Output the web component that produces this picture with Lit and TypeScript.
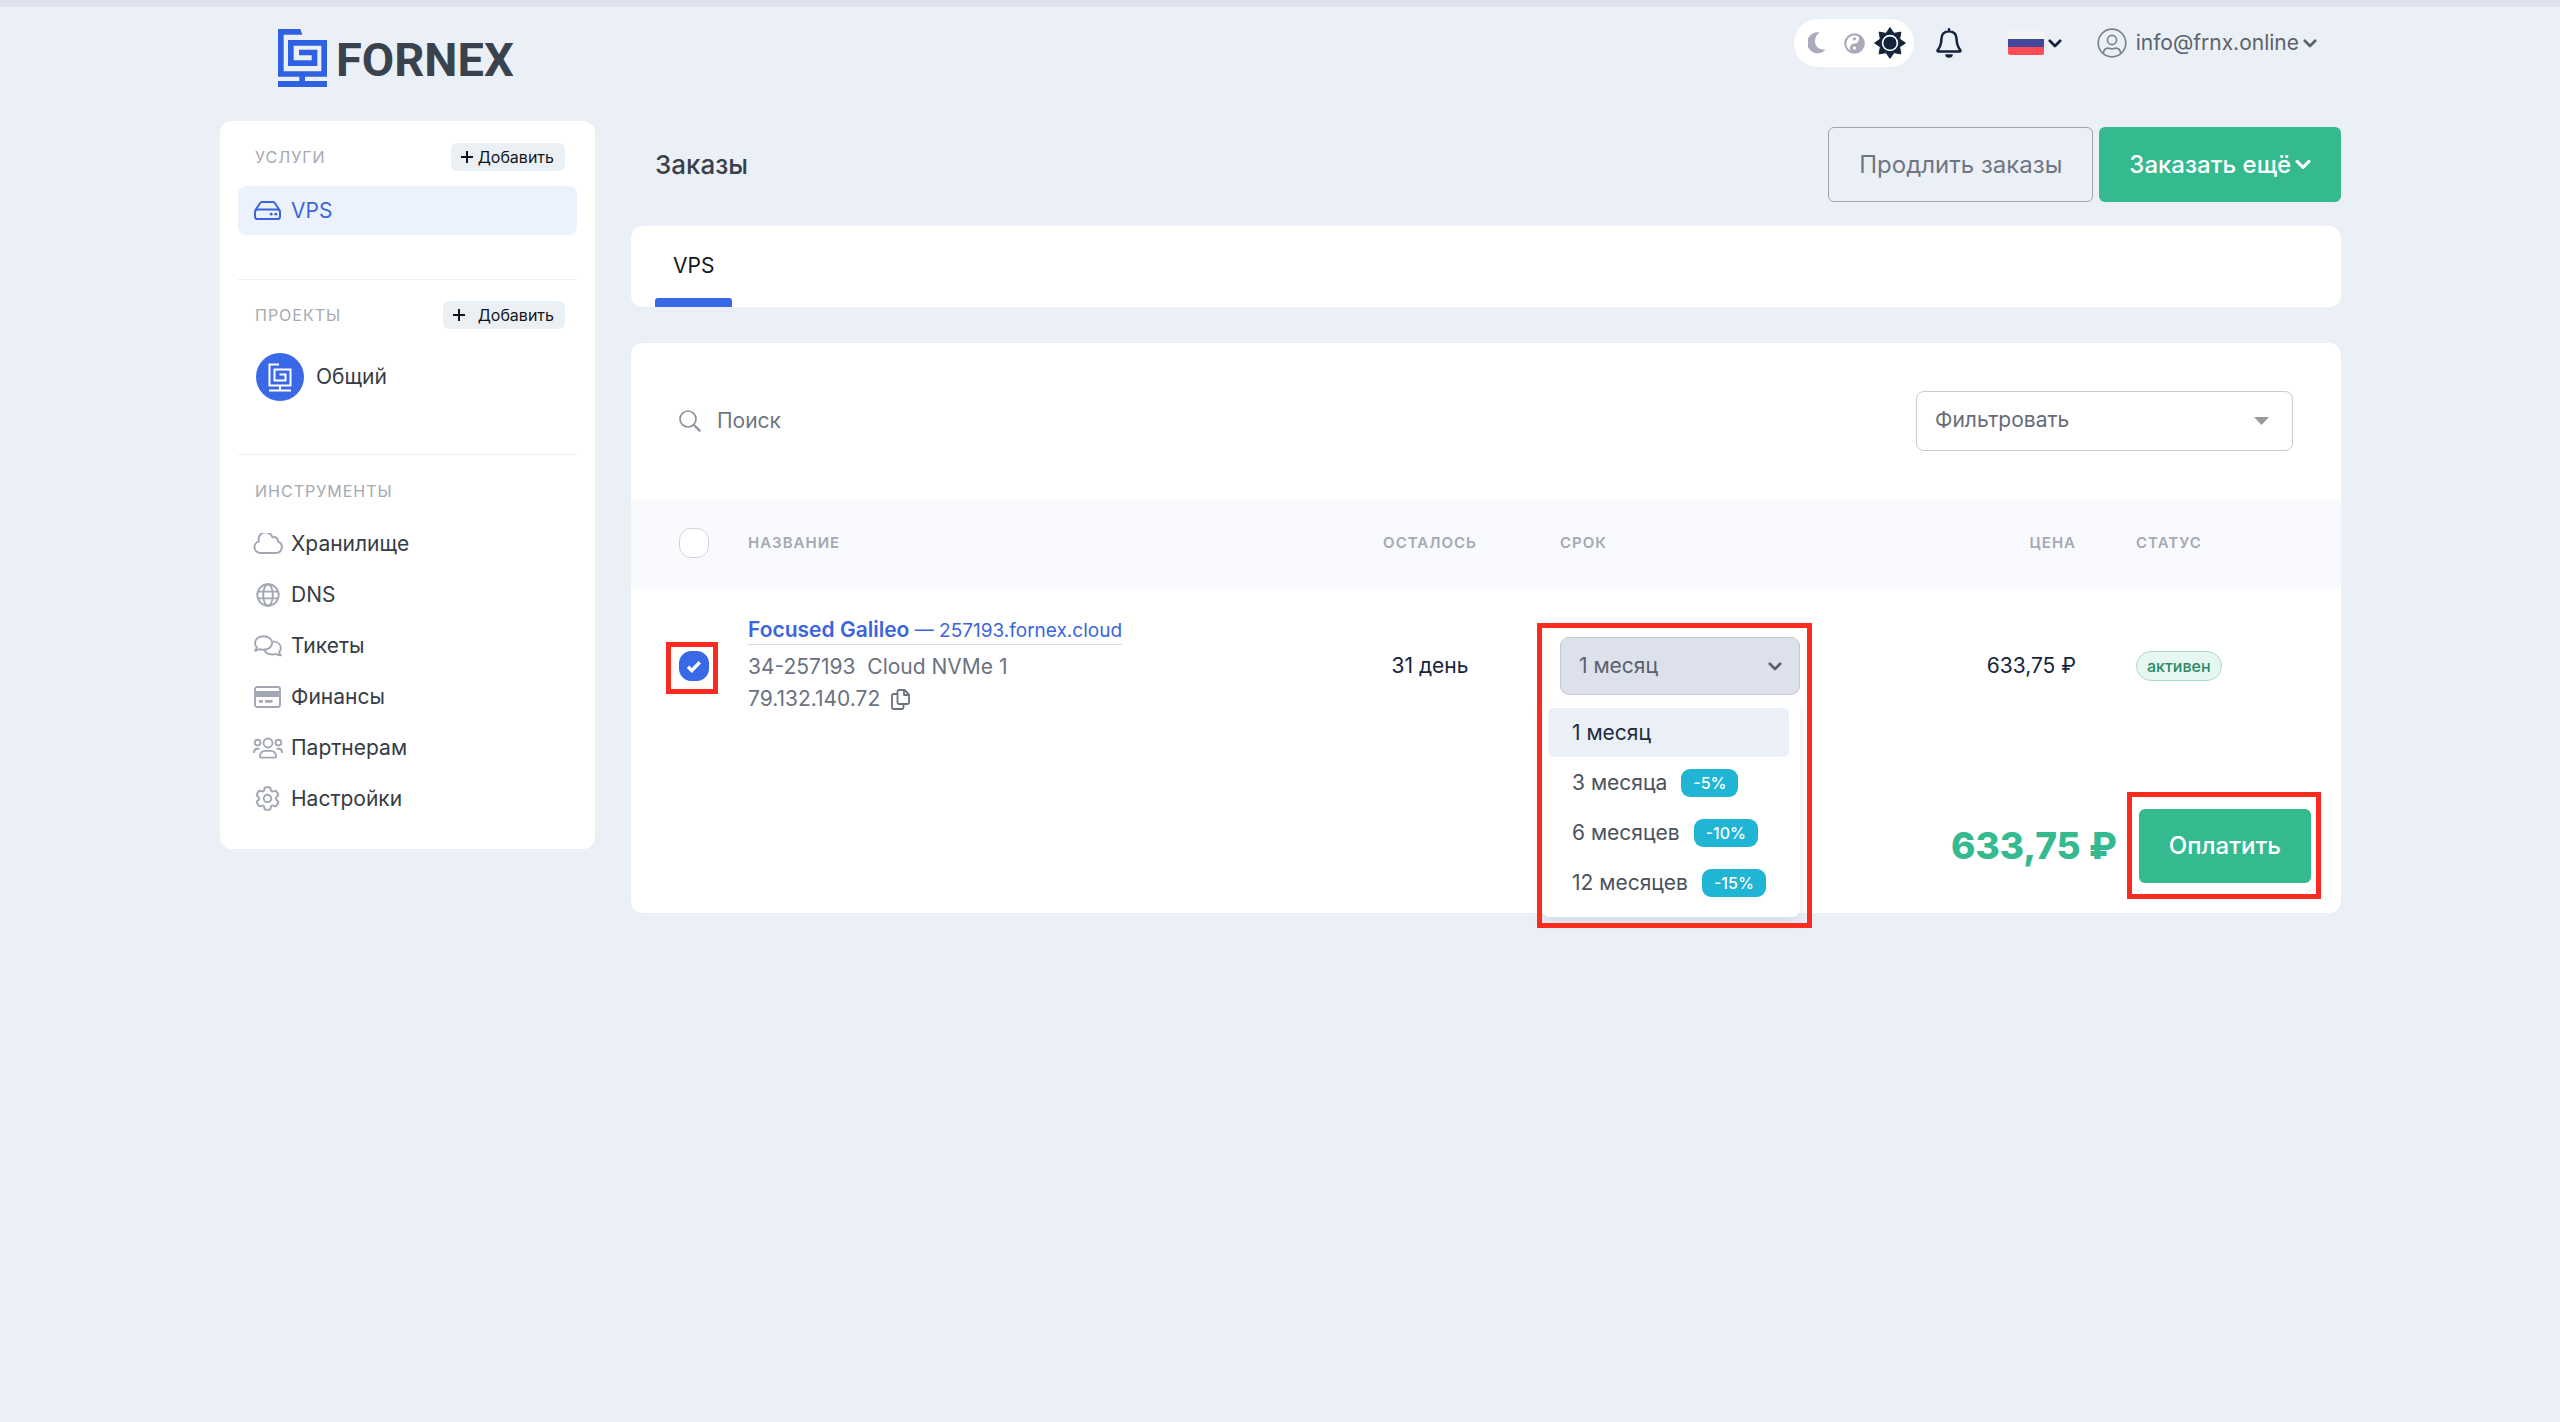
import { LitElement, html, css, svg } from "lit";
import { customElement, state } from "lit/decorators.js";
import { classMap } from "lit/directives/class-map.js";

const logoPaths = svg`
  <path d="M0 0H67L73 17H17V127H130V50H47V94H101V79H63V62H118V111H30V33H147V143H81V156H147V174H0V156H64V143H0Z" fill="currentColor"/>
`;

const chevron = html`<svg class="chevron" viewBox="0 0 14 9" aria-hidden="true">
  <path d="M1.800 1.800l5.200 5.200 5.200-5.200" fill="none" stroke="currentColor" stroke-width="2.700" stroke-linecap="round" stroke-linejoin="round"/>
</svg>`;

const plus = html`<svg class="plus" viewBox="0 0 12 12" aria-hidden="true">
  <path d="M6 0.5V11.5M0.5 6H11.5" fill="none" stroke="currentColor" stroke-width="2" stroke-linecap="round"/>
</svg>`;

const icons = {
  drive: html`<svg width="27" height="19" viewBox="0 0 27 19" aria-hidden="true">
    <g fill="none" stroke="currentColor" stroke-width="2" stroke-linejoin="round">
      <path d="M1.2 9.5L6 2.2Q6.8 1 8 1H19Q20.2 1 21 2.2L25.8 9.5"/>
      <rect x="1" y="8.6" width="25" height="9.4" rx="2.6"/>
    </g>
    <circle cx="17.2" cy="13.2" r="1.4" fill="currentColor"/><circle cx="21.8" cy="13.2" r="1.4" fill="currentColor"/>
  </svg>`,
  cloud: html`<svg width="30" height="21" viewBox="0 0 30 21" aria-hidden="true">
    <path d="M7 20H23a5.900 5.900 0 0 0 2-11.400 4.200 4.200 0 0 0-5.600-4.400A7 7 0 0 0 5.900 8.400 5.900 5.900 0 0 0 7 20z" fill="none" stroke="currentColor" stroke-width="2" stroke-linejoin="round"/>
  </svg>`,
  globe: html`<svg width="24" height="24" viewBox="0 0 24 24" aria-hidden="true">
    <g fill="none" stroke="currentColor" stroke-width="1.900">
      <circle cx="12" cy="12" r="10.700"/><ellipse cx="12" cy="12" rx="4.800" ry="10.700"/>
      <path d="M1.900 8.600H22.100M1.900 15.400H22.100"/>
    </g>
  </svg>`,
  chat: html`<svg width="28" height="22" viewBox="0 0 28 22" aria-hidden="true">
    <g fill="none" stroke="currentColor" stroke-width="1.900" stroke-linejoin="round">
      <path d="M9.600 1.200c4.900 0 8.600 3 8.600 6.800s-3.700 6.800-8.600 6.800c-1.400 0-2.700-.2-3.900-.7C4.500 15 3 15.700 1 15.700c1-1.100 1.600-2.300 1.800-3.400C1.600 11.100 1 9.700 1 8c0-3.800 3.700-6.800 8.600-6.800z"/>
      <path d="M18.800 6.400c4.700.2 8 2.900 8 6.500 0 1.700-.7 3.100-1.800 4.200.3 1.200 1 2.300 1.800 3.300-1.900 0-3.500-.6-4.700-1.500-1.200.4-2.500.6-3.800.6-3.700 0-6.800-1.800-8-4.600"/>
    </g>
  </svg>`,
  card: html`<svg width="27" height="22" viewBox="0 0 27 22" aria-hidden="true">
    <rect x="1" y="1" width="25" height="20" rx="2.200" fill="none" stroke="currentColor" stroke-width="1.900"/>
    <rect x="1" y="5" width="25" height="6" fill="currentColor"/>
    <rect x="5" y="14" width="4" height="2.800" rx=".6" fill="currentColor"/><rect x="11" y="14" width="7.500" height="2.800" rx=".6" fill="currentColor"/>
  </svg>`,
  people: html`<svg width="30" height="22" viewBox="0 0 30 22" aria-hidden="true">
    <g fill="none" stroke="currentColor" stroke-width="1.900" stroke-linecap="round" stroke-linejoin="round">
      <circle cx="15" cy="6" r="4.500"/><circle cx="4.600" cy="5.600" r="2.900"/><circle cx="25.400" cy="5.600" r="2.900"/>
      <path d="M8 20.600c-.8 0-1.200-.6-1.100-1.300.4-3.400 2.600-5.400 5.500-5.400h5.200c2.900 0 5.100 2 5.500 5.400.1.700-.3 1.300-1.100 1.300z"/>
      <path d="M1 15.200c.1-2.200 1.400-3.500 3.300-3.500h1.300M29 15.200c-.1-2.200-1.400-3.500-3.300-3.500h-1.300"/>
    </g>
  </svg>`,
  gear: html`<svg width="25" height="25" viewBox="2 2 20 20" aria-hidden="true">
    <g fill="none" stroke="currentColor" stroke-width="1.600" stroke-linejoin="round">
      <path d="M9.594 3.940c.09-.542.56-.94 1.110-.94h2.593c.55 0 1.020.398 1.110.94l.213 1.281c.063.374.313.686.645.87.074.04.147.083.22.127.325.196.72.257 1.075.124l1.217-.456a1.125 1.125 0 0 1 1.370.49l1.296 2.247a1.125 1.125 0 0 1-.26 1.431l-1.003.827c-.293.241-.438.613-.43.992a7.723 7.723 0 0 1 0 .255c-.008.378.137.75.43.991l1.004.827c.424.35.534.955.26 1.430l-1.298 2.247a1.125 1.125 0 0 1-1.369.491l-1.217-.456c-.355-.133-.75-.072-1.076.124a6.470 6.470 0 0 1-.22.128c-.331.183-.581.495-.644.869l-.213 1.281c-.09.543-.56.94-1.110.94h-2.594c-.55 0-1.019-.398-1.110-.94l-.213-1.281c-.062-.374-.312-.686-.644-.87a6.520 6.520 0 0 1-.22-.127c-.325-.196-.72-.257-1.076-.124l-1.217.456a1.125 1.125 0 0 1-1.369-.49l-1.297-2.247a1.125 1.125 0 0 1 .26-1.431l1.004-.827c.292-.24.437-.613.43-.991a6.932 6.932 0 0 1 0-.255c.007-.38-.138-.751-.43-.992l-1.004-.827a1.125 1.125 0 0 1-.26-1.430l1.297-2.247a1.125 1.125 0 0 1 1.370-.491l1.216.456c.356.133.751.072 1.076-.124.072-.044.146-.086.22-.128.332-.183.582-.495.644-.869l.214-1.280Z"/>
      <circle cx="12" cy="12" r="3"/>
    </g>
  </svg>`,
};

const sunPoints = Array.from({ length: 16 }, (_, i) => {
  const r = i % 2 ? 10.4 : 15.4;
  const a = (i * Math.PI) / 8;
  return `${(16 + r * Math.sin(a)).toFixed(2)},${(16 - r * Math.cos(a)).toFixed(2)}`;
}).join(" ");

const tools = [
  { label: "Хранилище", icon: icons.cloud },
  { label: "DNS", icon: icons.globe },
  { label: "Тикеты", icon: icons.chat },
  { label: "Финансы", icon: icons.card },
  { label: "Партнерам", icon: icons.people },
  { label: "Настройки", icon: icons.gear },
];

const terms = [
  { label: "1 месяц", discount: "" },
  { label: "3 месяца", discount: "-5%" },
  { label: "6 месяцев", discount: "-10%" },
  { label: "12 месяцев", discount: "-15%" },
];

const base = css`
  * {
    box-sizing: border-box;
  }
  svg {
    display: block;
    flex: none;
  }
  a {
    color: inherit;
    text-decoration: none;
  }
  button,
  input,
  select {
    margin: 0;
    border: 0;
    padding: 0;
    background: none;
    font: inherit;
    color: inherit;
  }
  button {
    cursor: pointer;
  }
  .chevron {
    width: 14px;
    height: 9px;
  }
  .plus {
    width: 12px;
    height: 12px;
  }
`;

@customElement("fx-header")
export class FxHeader extends LitElement {
  static styles = [
    base,
    css`
      :host {
        display: block;
      }
      .header {
        display: flex;
        justify-content: space-between;
        align-items: flex-start;
        padding: 12px 24px 34px 58px;
      }
      .logo {
        display: flex;
        align-items: center;
        gap: 9px;
        margin-top: 10px;
        color: #2f62e3;
      }
      .brand {
        padding-top: 4px;
        font: 700 47px/54px Roboto, sans-serif;
        color: #3a424d;
      }
      .controls {
        display: flex;
        align-items: center;
        height: 48px;
      }
      .themes {
        display: flex;
        align-items: center;
        gap: 18px;
        height: 48px;
        padding: 0 8px 0 14px;
        border-radius: 24px;
        background: #fff;
        color: #a9abbd;
      }
      .themes .active {
        margin-left: -9px;
        color: #14233c;
      }
      .bell {
        margin-left: 22px;
        color: #14233c;
      }
      .lang {
        display: flex;
        align-items: center;
        gap: 4px;
        margin-left: 46px;
        color: #14233c;
      }
      .user {
        display: flex;
        align-items: center;
        gap: 4px;
        margin-left: 35px;
        color: #5b626c;
      }
      .user svg:first-child {
        margin-right: 5px;
        color: #7d838d;
      }
    `,
  ];

  render() {
    return html`
      <header class="header">
        <a class="logo" href="#" aria-label="FORNEX">
          <svg width="49" height="58" viewBox="0 0 147 174" aria-hidden="true">${logoPaths}</svg>
          <span class="brand">FORNEX</span>
        </a>
        <div class="controls">
          <div class="themes">
            <button aria-label="Тёмная тема">
              <svg width="18" height="22" viewBox="0 0 18 22" aria-hidden="true">
                <path d="M11.500.5A10.500 10.500 0 1 0 17.800 17.200C11 18.500 7 14.500 7 9 7 5.500 8.700 2.500 11.500.5z" fill="currentColor"/>
              </svg>
            </button>
            <button aria-label="Системная тема">
              <svg width="21" height="21" viewBox="0 0 21 21" aria-hidden="true">
                <circle cx="10.500" cy="10.500" r="9.200" fill="#fff" stroke="currentColor" stroke-width="2.200"/>
                <path d="M10.500 1.200A9.300 9.300 0 0 1 10.500 19.800A4.650 4.650 0 0 1 10.500 10.500A4.650 4.650 0 0 0 10.500 1.200z" fill="currentColor"/>
                <circle cx="10.500" cy="5.900" r="1.600" fill="currentColor"/>
                <circle cx="10.500" cy="15.100" r="1.600" fill="#fff"/>
              </svg>
            </button>
            <button class="active" aria-label="Светлая тема">
              <svg width="32" height="32" viewBox="0 0 32 32" aria-hidden="true">
                <polygon points=${sunPoints} fill="currentColor" stroke="currentColor" stroke-width="1" stroke-linejoin="round"/>
                <circle cx="16" cy="16" r="7.400" fill="none" stroke="#fff" stroke-width="1.600"/>
              </svg>
            </button>
          </div>
          <button class="bell" aria-label="Уведомления">
            <svg width="26" height="30" viewBox="0 0 26 30" aria-hidden="true">
              <path d="M13 3.200C8.300 3.200 5.400 6.600 5.400 11c0 6-1.700 8.600-3.700 11.200-.4.600 0 1.300.7 1.300h21.200c.7 0 1.100-.7.7-1.300-2-2.600-3.700-5.200-3.700-11.200 0-4.400-2.900-7.800-7.600-7.800zM13 1.300V3" fill="none" stroke="currentColor" stroke-width="2.500" stroke-linecap="round" stroke-linejoin="round"/>
              <path d="M9.200 26.200H16.800A3.800 3.600 0 0 1 9.200 26.200z" fill="currentColor"/>
            </svg>
          </button>
          <button class="lang" aria-label="Язык">
            <svg width="36" height="24" viewBox="0 0 36 24" aria-hidden="true">
              <path d="M2 0H34a2 2 0 0 1 2 2V8H0V2a2 2 0 0 1 2-2z" fill="#f4f4f4"/>
              <rect y="8" width="36" height="8" fill="#42479b"/>
              <path d="M0 16H36V22a2 2 0 0 1-2 2H2a2 2 0 0 1-2-2z" fill="#ff4b57"/>
            </svg>
            ${chevron}
          </button>
          <button class="user">
            <svg width="30" height="30" viewBox="0 0 30 30" aria-hidden="true">
              <g fill="none" stroke="currentColor" stroke-width="1.700">
                <circle cx="15" cy="15" r="13.800"/><circle cx="15" cy="12" r="4.600"/>
                <path d="M6.300 25.500c.4-3.700 2.400-5.400 4.800-5.400 1.400 0 2 .8 3.900.8s2.500-.8 3.900-.8c2.400 0 4.400 1.700 4.800 5.400"/>
              </g>
            </svg>
            <span>info@frnx.online</span>
            ${chevron}
          </button>
        </div>
      </header>
    `;
  }
}

@customElement("fx-sidebar")
export class FxSidebar extends LitElement {
  static styles = [
    base,
    css`
      :host {
        display: block;
      }
      .card {
        padding: 22px 18px 25px;
        border-radius: 12px;
        background: #fff;
      }
      .caption {
        display: flex;
        align-items: center;
        justify-content: space-between;
        padding: 0 12px 0 17px;
        font-size: 16px;
        line-height: 20px;
        letter-spacing: 1px;
        color: #a4a9b3;
      }
      .add {
        display: flex;
        align-items: center;
        gap: 5px;
        height: 28px;
        padding: 0 11px 0 10px;
        border-radius: 6px;
        background: #ebf0f5;
        font-size: 16px;
        letter-spacing: normal;
        color: #12161c;
      }
      .add.wide {
        gap: 13px;
      }
      .item {
        display: flex;
        align-items: center;
        gap: 8px;
        height: 51px;
        padding-left: 14px;
        border-radius: 8px;
        color: #363c46;
      }
      .slot {
        display: flex;
        justify-content: center;
        width: 31px;
        color: #a3a7b5;
      }
      .item.active {
        height: 49px;
        margin-top: 15px;
        background: #ebf2fe;
        color: #3c64dc;
      }
      .active .slot {
        color: inherit;
      }
      .group {
        margin-top: 44px;
        padding-top: 21px;
        border-top: 1px solid #edeff3;
      }
      .project {
        display: flex;
        align-items: center;
        gap: 12px;
        margin-top: 24px;
        padding-left: 18px;
        color: #363c46;
      }
      .avatar {
        display: flex;
        align-items: center;
        justify-content: center;
        width: 48px;
        height: 48px;
        border-radius: 50%;
        background: #3a69e8;
        color: #fff;
      }
      .tools {
        margin-top: 53px;
        padding-top: 26px;
      }
      .list {
        margin: 17px 0 0;
        padding: 0;
        list-style: none;
      }
    `,
  ];

  render() {
    return html`
      <nav class="card">
        <div class="caption"><span>УСЛУГИ</span><button class="add">${plus}Добавить</button></div>
        <a class="item active" href="#"><span class="slot">${icons.drive}</span>VPS</a>
        <div class="group">
          <div class="caption"><span>ПРОЕКТЫ</span><button class="add wide">${plus}Добавить</button></div>
          <a class="project" href="#">
            <span class="avatar">
              <svg width="24" height="29" viewBox="0 0 24 29" aria-hidden="true">
                <path d="M11 1.500H1.500V22.500H22.500V6.500H6.500V17.500H17.500V11.500H11.500M12 22.500V27.300M1 27.500H23" fill="none" stroke="currentColor" stroke-width="2"/>
              </svg>
            </span>
            Общий
          </a>
        </div>
        <div class="group tools">
          <div class="caption"><span>ИНСТРУМЕНТЫ</span></div>
          <ul class="list">
            ${tools.map(
              (t) => html`<li><a class="item" href="#"><span class="slot">${t.icon}</span>${t.label}</a></li>`,
            )}
          </ul>
        </div>
      </nav>
    `;
  }
}

@customElement("fx-orders")
export class FxOrders extends LitElement {
  static styles = [
    base,
    css`
      :host {
        display: block;
      }
      .head {
        display: flex;
        align-items: center;
        gap: 6px;
        padding: 6px 0 24px 24px;
      }
      .title {
        flex: 1;
        margin: 0;
        font-size: 26px;
        font-weight: 500;
        color: #3a414b;
      }
      .btn {
        display: flex;
        align-items: center;
        justify-content: center;
        gap: 4px;
        height: 75px;
        padding: 0 30px;
        border-radius: 6px;
        font-size: 24px;
      }
      .outline {
        border: 1px solid #9ea4b0;
        color: #6f7681;
      }
      .solid {
        background: #35ba90;
        color: #fff;
        font-weight: 500;
      }
      .solid .chevron {
        width: 16px;
        height: 11px;
      }
      .card {
        border-radius: 12px;
        background: #fff;
      }
      .tabs {
        display: flex;
        padding: 0 24px;
      }
      .tab {
        position: relative;
        height: 81px;
        padding: 0 18px 2px;
        color: #14181e;
      }
      .tab::after {
        content: "";
        position: absolute;
        inset: auto 0 0;
        height: 9px;
        border-radius: 3px 3px 0 0;
        background: #3a69e8;
      }
      .panel {
        margin-top: 36px;
      }
      .toolbar {
        display: flex;
        align-items: center;
        justify-content: space-between;
        padding: 48px 48px 49px;
      }
      .search {
        display: flex;
        flex: 1;
        align-items: center;
        gap: 16px;
        color: #8d929d;
      }
      .search input {
        flex: 1;
        outline: 0;
        color: #4a505a;
      }
      .search input::placeholder {
        color: #6f7582;
        opacity: 1;
      }
      .select {
        position: relative;
        display: flex;
        align-items: center;
      }
      .select select {
        appearance: none;
        width: 100%;
        padding: 0 18px;
      }
      .select svg {
        position: absolute;
        right: 18px;
        pointer-events: none;
      }
      .filter {
        width: 377px;
      }
      .filter select {
        height: 60px;
        padding-bottom: 2px;
        border: 1px solid #c9ccd2;
        border-radius: 8px;
        color: #666c78;
      }
      .filter svg {
        right: 24px;
        color: #999;
      }
      .table {
        width: 100%;
        border-collapse: collapse;
      }
      th {
        height: 89px;
        padding: 0 0 3px;
        background: #f8fafd;
        font-size: 15px;
        font-weight: 600;
        letter-spacing: 1px;
        text-align: left;
        color: #a4a9b3;
      }
      td {
        padding: 28px 0;
        color: #16253d;
      }
      .c-check {
        width: 117px;
        padding-left: 48px;
      }
      .c-left {
        width: 200px;
        text-align: center;
      }
      .c-term {
        width: 300px;
        padding-left: 30px;
      }
      .c-price {
        width: 275px;
        padding-right: 29px;
        text-align: right;
      }
      .c-state {
        width: 236px;
        padding-left: 31px;
      }
      .check {
        position: relative;
        display: flex;
        width: 30px;
        height: 30px;
      }
      .check input {
        appearance: none;
        width: 30px;
        height: 30px;
        border: 1px solid #cfd3da;
        border-radius: 12px;
        background: #fff;
      }
      .check input:checked {
        border-color: #3a69e8;
        background: #3a69e8;
      }
      .check svg {
        position: absolute;
        inset: 9px auto auto 7px;
        pointer-events: none;
      }
      .mark {
        position: absolute;
        border: 5px solid #fa2c20;
        pointer-events: none;
      }
      .mark-check {
        inset: -9px -9px -13px -13px;
      }
      .name {
        display: block;
        width: fit-content;
        margin-bottom: 6px;
        border-bottom: 1px solid #d8dbe1;
        font-size: 19px;
        line-height: 26px;
        color: #3c64dc;
      }
      .name b {
        font-size: 21px;
        font-weight: 600;
      }
      .line {
        display: flex;
        align-items: center;
        gap: 11px;
        line-height: 32px;
        color: #6b7280;
      }
      .plan {
        white-space: pre;
      }
      .term {
        position: relative;
        width: 240px;
      }
      .term select {
        height: 58px;
        border: 1px solid #c4c8d6;
        border-radius: 9px;
        background: #dde1eb;
        color: #5a616b;
      }
      .select .chevron {
        color: #5a616b;
      }
      .menu {
        position: absolute;
        z-index: 1;
        top: 66px;
        left: -18px;
        display: flex;
        flex-direction: column;
        gap: 1px;
        width: 258px;
        margin: 0;
        padding: 5px 11px 10px 6px;
        border-radius: 8px;
        background: #fff;
        box-shadow: 0 6px 12px rgba(40, 50, 80, 0.1);
        list-style: none;
      }
      .option {
        display: flex;
        align-items: center;
        gap: 14px;
        width: 100%;
        height: 49px;
        padding-left: 24px;
        border-radius: 6px;
        color: #4c525c;
      }
      .option.current {
        background: #ebf0f6;
        color: #1e2b40;
      }
      .off {
        height: 28px;
        padding: 0 12px;
        border-radius: 9px;
        background: #20b5d5;
        font-size: 16px;
        font-weight: 500;
        line-height: 28px;
        color: #fff;
      }
      .mark-term {
        z-index: 2;
        inset: -14px -12px -233px -23px;
      }
      .badge {
        display: inline-block;
        height: 30px;
        padding: 0 10px;
        border: 1px solid #a5dfc9;
        border-radius: 15px;
        background: #e6f7f1;
        font-size: 16px;
        font-weight: 500;
        line-height: 28px;
        color: #2b8765;
      }
      .footer {
        display: flex;
        align-items: center;
        justify-content: flex-end;
        gap: 22px;
        padding: 66px 30px 30px;
      }
      .total {
        font-size: 37px;
        font-weight: 800;
        color: #35ba90;
      }
      .pay {
        position: relative;
      }
      .pay .btn {
        height: 74px;
      }
      .mark-pay {
        inset: -17px -10px -16px -12px;
      }
    `,
  ];

  @state() private term = 0;

  render() {
    return html`
      <div class="head">
        <h1 class="title">Заказы</h1>
        <button class="btn outline">Продлить заказы</button>
        <button class="btn solid">Заказать ещё${chevron}</button>
      </div>
      <div class="card tabs"><button class="tab">VPS</button></div>
      <section class="card panel">
        <div class="toolbar">
          <label class="search">
            <svg width="22" height="22" viewBox="0 0 22 22" aria-hidden="true">
              <g fill="none" stroke="currentColor" stroke-linecap="round">
                <circle cx="9" cy="9" r="8" stroke-width="1.700"/><path d="M14.800 14.800L20.600 20.600" stroke-width="2.200"/>
              </g>
            </svg>
            <input type="search" placeholder="Поиск" aria-label="Поиск" />
          </label>
          <div class="select filter">
            <select aria-label="Фильтровать"><option>Фильтровать</option></select>
            <svg width="15" height="8" viewBox="0 0 15 8" aria-hidden="true"><path d="M0 0H15L7.500 8z" fill="currentColor"/></svg>
          </div>
        </div>
        <table class="table">
          <thead>
            <tr>
              <th class="c-check"><span class="check"><input type="checkbox" aria-label="Выбрать все" /></span></th>
              <th>НАЗВАНИЕ</th>
              <th class="c-left">ОСТАЛОСЬ</th>
              <th class="c-term">СРОК</th>
              <th class="c-price">ЦЕНА</th>
              <th class="c-state">СТАТУС</th>
            </tr>
          </thead>
          <tbody>
            <tr>
              <td class="c-check">
                <span class="check">
                  <input type="checkbox" checked aria-label="Выбрать Focused Galileo" />
                  <svg width="16" height="13" viewBox="0 0 16 13" aria-hidden="true">
                    <path d="M2 6.800L5.800 10.500L13.800 2.300" fill="none" stroke="#fff" stroke-width="3.400"/>
                  </svg>
                  <span class="mark mark-check"></span>
                </span>
              </td>
              <td>
                <a class="name" href="#"><b>Focused Galileo</b> — 257193.fornex.cloud</a>
                <div class="line"><span class="plan">34-257193  Cloud NVMe 1</span></div>
                <div class="line">
                  <span>79.132.140.72</span>
                  <button aria-label="Скопировать IP">
                    <svg width="19" height="21" viewBox="0 0 19 21" aria-hidden="true">
                      <g fill="none" stroke="currentColor" stroke-width="1.800" stroke-linejoin="round">
                        <path d="M6.500 2.500a1.500 1.500 0 0 1 1.500-1.500H13.500L18 5.500V13.500a1.500 1.500 0 0 1-1.500 1.500H8a1.500 1.500 0 0 1-1.500-1.500z"/>
                        <path d="M13 1V6H18M6.500 5H2.500A1.500 1.500 0 0 0 1 6.500V18.500A1.500 1.500 0 0 0 2.500 20H11A1.500 1.500 0 0 0 12.500 18.500V15"/>
                      </g>
                    </svg>
                  </button>
                </div>
              </td>
              <td class="c-left">31 день</td>
              <td class="c-term">
                <div class="term">
                  <div class="select">
                    <select aria-label="Срок">
                      ${terms.map((t, i) => html`<option ?selected=${i === this.term}>${t.label}</option>`)}
                    </select>
                    ${chevron}
                  </div>
                  <ul class="menu">
                    ${terms.map(
                      (t, i) => html`<li>
                        <button
                          class=${classMap({ option: true, current: i === this.term })}
                          @click=${() => (this.term = i)}
                        >
                          ${t.label}${t.discount ? html`<span class="off">${t.discount}</span>` : ""}
                        </button>
                      </li>`,
                    )}
                  </ul>
                  <span class="mark mark-term"></span>
                </div>
              </td>
              <td class="c-price">633,75 ₽</td>
              <td class="c-state"><span class="badge">активен</span></td>
            </tr>
          </tbody>
        </table>
        <div class="footer">
          <span class="total">633,75 ₽</span>
          <div class="pay">
            <button class="btn solid">Оплатить</button>
            <span class="mark mark-pay"></span>
          </div>
        </div>
      </section>
    `;
  }
}

@customElement("app-root")
export class AppRoot extends LitElement {
  static styles = [
    base,
    css`
      :host {
        display: block;
        min-height: 100vh;
        box-sizing: border-box;
        padding: 0 219px 0 220px;
        border-top: 7px solid #dee2ec;
        background: #ebf0f7;
        font: 400 21px/28px Inter, "Open Sans", sans-serif;
      }
      .layout {
        display: grid;
        grid-template-columns: 375px minmax(0, 1fr);
        align-items: start;
        gap: 36px;
      }
    `,
  ];

  render() {
    return html`
      <fx-header></fx-header>
      <div class="layout">
        <fx-sidebar></fx-sidebar>
        <main><fx-orders></fx-orders></main>
      </div>
    `;
  }
}
